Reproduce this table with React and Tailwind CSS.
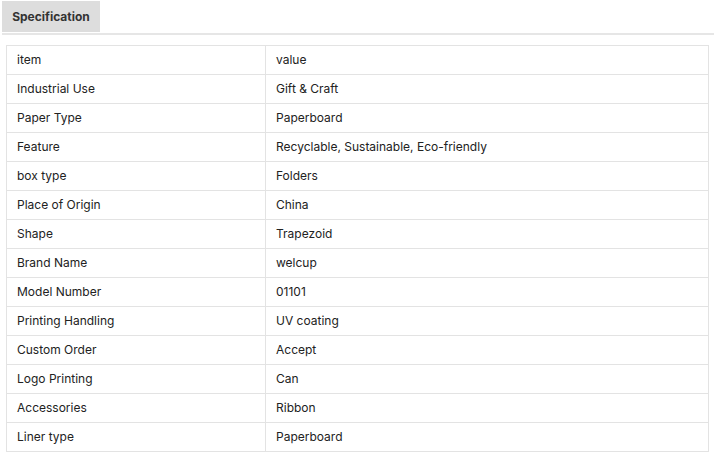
import React from 'react';

const rows = [
    ['item', 'value'],
    ['Industrial Use', 'Gift & Craft'],
    ['Paper Type', 'Paperboard'],
    ['Feature', 'Recyclable, Sustainable, Eco-friendly'],
    ['box type', 'Folders'],
    ['Place of Origin', 'China'],
    ['Shape', 'Trapezoid'],
    ['Brand Name', 'welcup'],
    ['Model Number', '01101'],
    ['Printing Handling', 'UV coating'],
    ['Custom Order', 'Accept'],
    ['Logo Printing', 'Can'],
    ['Accessories', 'Ribbon'],
    ['Liner type', 'Paperboard'],
];

const App = () => {
    return (
        <div className="bg-white w-[714px] h-[461px] pt-px pl-[2px] font-['Inter',sans-serif] text-[#222]">
            {/* Tabs */}
            <div className="flex border-b-2 border-[#e6e6e6]">
                <div className="w-[98px] h-[31px] bg-[#dddddd] flex items-center justify-center text-[12px] font-bold text-[#333] mb-[1px]">
                    Specification
                </div>
            </div>

            {/* Table */}
            <div className="ml-[4px] mt-[10px] w-[703px]">
                <table className="w-full border-collapse border border-[#e3e3e3] text-[12px]">
                    <tbody>
                        {rows.map(([k, v]) => (
                            <tr key={k} className="h-[29px]">
                                <td className="w-[259px] border border-[#e3e3e3] pl-[10px] py-0">{k}</td>
                                <td className="border border-[#e3e3e3] pl-[10px] py-0">{v}</td>
                            </tr>
                        ))}
                    </tbody>
                </table>
            </div>
        </div>
    );
};

export default App;
